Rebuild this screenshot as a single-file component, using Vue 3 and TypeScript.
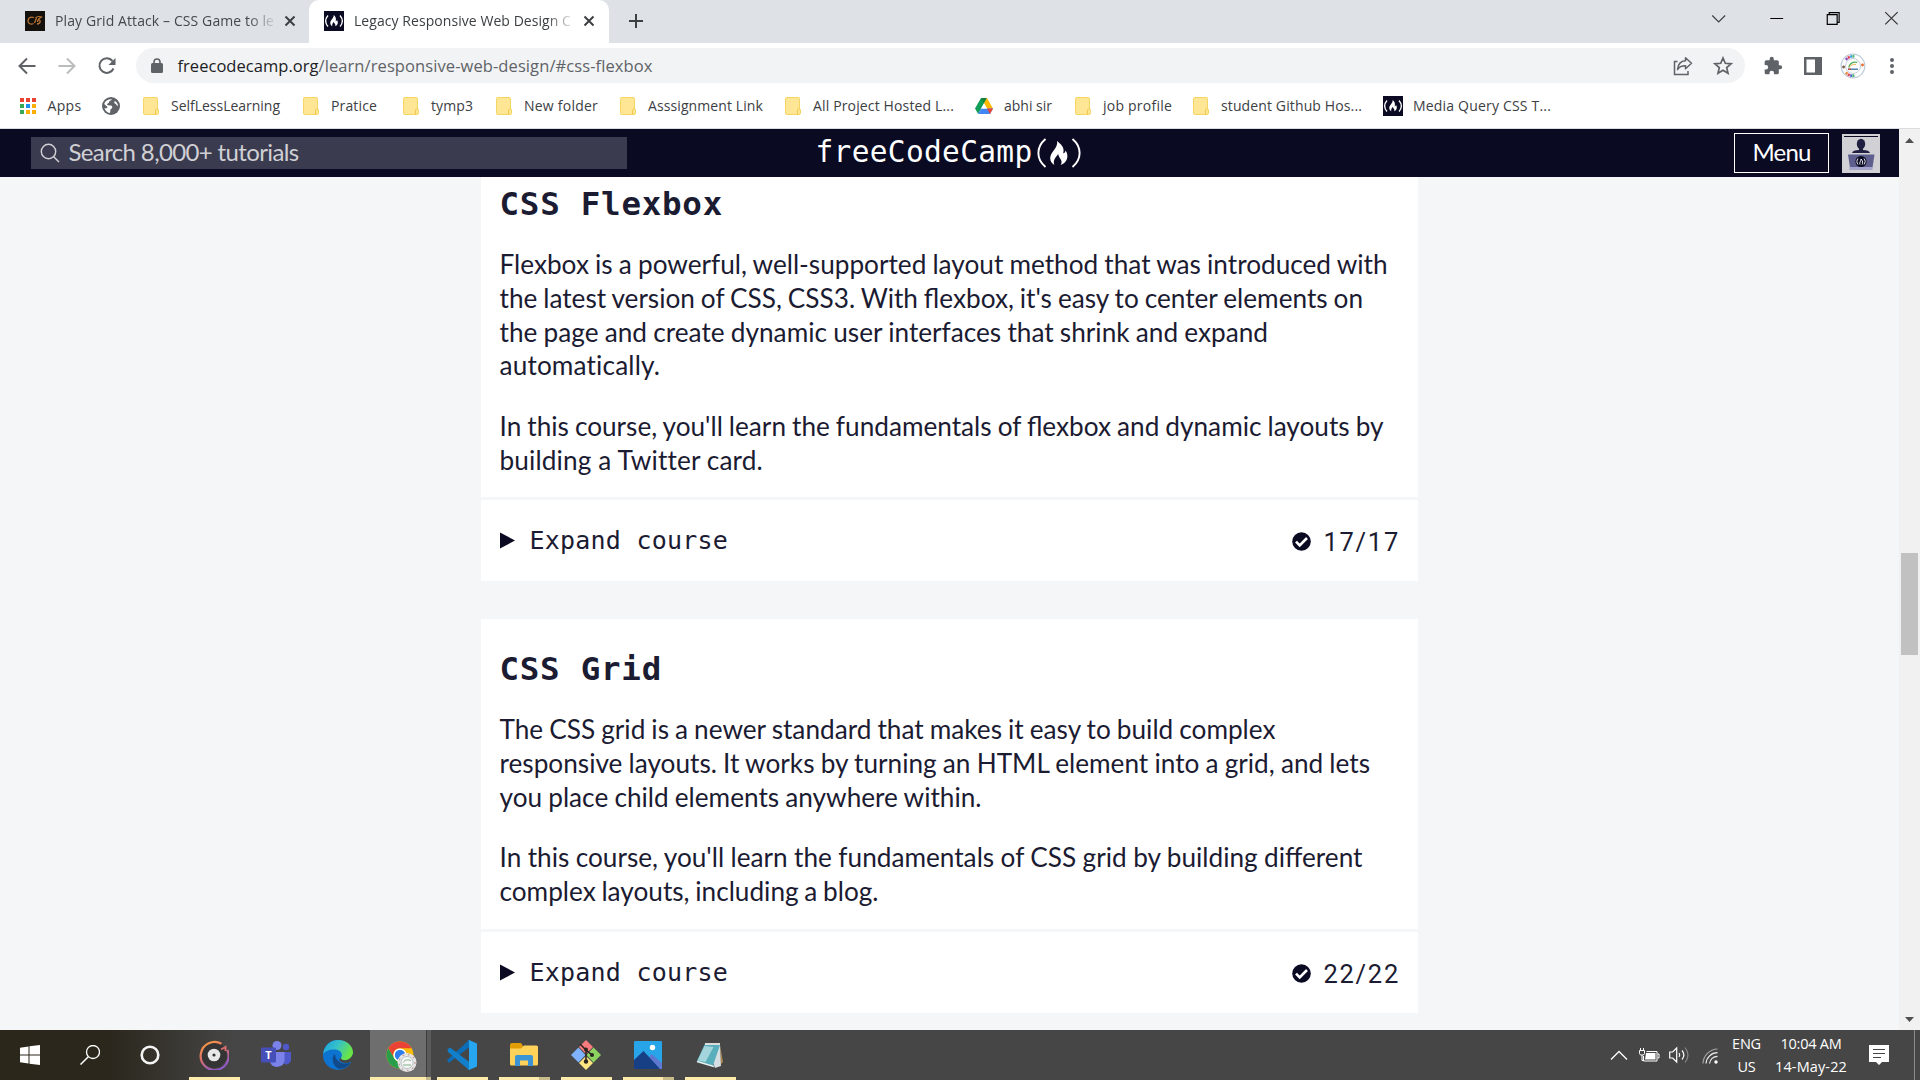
<script setup lang="ts">
import type { Directive } from 'vue'

interface Bookmark { icon: string; label: string; slot: number; text: number }
interface Line { text: string; width: number; loose?: boolean }
interface Course { title: string; titleWidth: number; paragraphs: Line[][]; done: string; height: number }
interface App { name: string; state: string }

// Spreads the letters (or, with .words, the words) so that a label takes exactly the given width.
const vFit: Directive<HTMLElement, number, 'words'> = {
  mounted(el, { value, modifiers }) {
    const text = (el.textContent ?? '').trim()
    const rest = value - el.getBoundingClientRect().width
    if (modifiers.words) el.style.wordSpacing = `${rest / (text.split(' ').length - 1)}px`
    else el.style.letterSpacing = `${rest / text.length}px`
  },
}

const bookmarks: Bookmark[] = [
  { icon: 'apps', label: 'Apps', slot: 83, text: 34 },
  { icon: 'globe', label: '', slot: 41, text: 0 },
  { icon: 'folder', label: 'SelfLessLearning', slot: 160, text: 109 },
  { icon: 'folder', label: 'Pratice', slot: 100, text: 46 },
  { icon: 'folder', label: 'tymp3', slot: 93, text: 42 },
  { icon: 'folder', label: 'New folder', slot: 124, text: 74 },
  { icon: 'folder', label: 'Asssignment Link', slot: 165, text: 115 },
  { icon: 'folder', label: 'All Project Hosted L...', slot: 190, text: 141 },
  { icon: 'drive', label: 'abhi sir', slot: 100, text: 48 },
  { icon: 'folder', label: 'job profile', slot: 118, text: 69 },
  { icon: 'folder', label: 'student Github Hos...', slot: 190, text: 141 },
  { icon: 'fcc', label: 'Media Query CSS T...', slot: 180, text: 138 },
]

const courses: Course[] = [
  {
    title: 'CSS Flexbox',
    titleWidth: 223.5,
    paragraphs: [
      [
        { text: 'Flexbox is a powerful, well-supported layout method that was introduced with', width: 888 },
        { text: "the latest version of CSS, CSS3. With flexbox, it's easy to center elements on", width: 863.5 },
        { text: 'the page and create dynamic user interfaces that shrink and expand', width: 768.5 },
        { text: 'automatically.', width: 161, loose: true },
      ],
      [
        { text: "In this course, you'll learn the fundamentals of flexbox and dynamic layouts by", width: 884 },
        { text: 'building a Twitter card.', width: 262.5, loose: true },
      ],
    ],
    done: '17/17',
    height: 343,
  },
  {
    title: 'CSS Grid',
    titleWidth: 162.5,
    paragraphs: [
      [
        { text: 'The CSS grid is a newer standard that makes it easy to build complex', width: 776 },
        { text: 'responsive layouts. It works by turning an HTML element into a grid, and lets', width: 870.5 },
        { text: 'you place child elements anywhere within.', width: 482 },
      ],
      [
        { text: "In this course, you'll learn the fundamentals of CSS grid by building different", width: 863 },
        { text: 'complex layouts, including a blog.', width: 379 },
      ],
    ],
    done: '22/22',
    height: 310,
  },
]

const apps: App[] = [
  { name: 'groove', state: 'open' },
  { name: 'teams', state: '' },
  { name: 'edge', state: '' },
  { name: 'chrome', state: 'active' },
  { name: 'code', state: 'open' },
  { name: 'explorer', state: 'multi' },
  { name: 'git', state: 'open' },
  { name: 'photos', state: 'multi' },
  { name: 'notepad', state: 'open' },
]
</script>

<template>
  <div class="screen">
    <div class="tabstrip">
      <div class="tab">
        <svg class="favicon" width="20" height="20" viewBox="0 0 20 20">
          <rect width="20" height="20" fill="#14100c" />
          <path d="M9 6.500C5 5 3 7.500 3 10s3 4 5.500 2.500M9.500 12l2-5M10.500 7c2-2 5-1.500 6-1-2 1-4 3-4 5M13 8.500c3 0 3 4-1 4.500" fill="none" stroke="#b87436" stroke-width="1.300" />
        </svg>
        <div class="tab-title"><span v-fit="219">Play Grid Attack – CSS Game to le</span></div>
        <svg class="x" width="12" height="12" viewBox="0 0 12 12"><path d="M1.500 1.500l9 9m0-9l-9 9" stroke="#3c4043" stroke-width="2" /></svg>
      </div>
      <div class="tab active">
        <svg class="favicon" width="20" height="20" viewBox="0 0 20 20">
          <rect width="20" height="20" fill="#0a0a23" />
          <path d="M4 4.500C1 8 1 12 4 15.500M16 4.500c3 3.500 3 7.500 0 11" fill="none" stroke="#fff" stroke-width="1.300" />
          <path d="M9.500 4c1 3-3.500 5-3.200 8.200.1 1.400.9 2.400 2 3-.6-2 .6-3 1.500-4.500.3 2 2.400 2.600 1.400 4.500 3-1 3.200-4.300 1.800-6.200-.3 1-.8 1.300-1.300 1.300C12.500 7.800 11.500 5 9.500 4z" fill="#fff" />
        </svg>
        <div class="tab-title"><span v-fit="217">Legacy Responsive Web Design C</span></div>
        <svg class="x" width="12" height="12" viewBox="0 0 12 12"><path d="M1.500 1.500l9 9m0-9l-9 9" stroke="#3c4043" stroke-width="2" /></svg>
      </div>
      <svg class="plus" width="16" height="16" viewBox="0 0 16 16"><path d="M8 1v14M1 8h14" stroke="#3c4043" stroke-width="2" /></svg>
      <div class="winbuttons">
        <svg viewBox="0 0 58 36"><path d="M22.500 15.500l6.500 6.500 6.500-6.500" fill="none" stroke="#3c4043" stroke-width="1.200" /></svg>
        <svg viewBox="0 0 58 36"><path d="M22.500 18.500h13" stroke="#000" /></svg>
        <svg viewBox="0 0 58 36"><path d="M22.500 14.500h10v10h-10zM24.500 14.500v-2h10v10h-2" fill="none" stroke="#000" stroke-width="1.200" /></svg>
        <svg viewBox="0 0 58 36"><path d="M22.500 12l12.500 12.500m0-12.500L22.500 24.500" stroke="#333" stroke-width="1.200" /></svg>
      </div>
    </div>

    <div class="toolbar">
      <div class="nav">
        <svg width="40" height="20" viewBox="0 0 40 20"><path d="M28.500 10H13M20 2.500L12.500 10l7.500 7.500" fill="none" stroke="#5f6368" stroke-width="2" /></svg>
        <svg width="40" height="20" viewBox="0 0 40 20"><path d="M11.500 10H27M20 2.500l7.500 7.500-7.500 7.500" fill="none" stroke="#babcbe" stroke-width="2" /></svg>
        <svg width="40" height="20" viewBox="0 0 40 20"><path d="M26.500 12.500A7.300 7.300 0 1 1 25.500 5" fill="none" stroke="#5f6368" stroke-width="2" /><path d="M28.500 2v7h-7z" fill="#5f6368" /></svg>
      </div>
      <div class="omnibox">
        <svg class="lock" width="12" height="16" viewBox="0 0 12 16"><rect y="5" width="12" height="10" rx="1.500" fill="#5f6368" /><path d="M3 6V4a3 3 0 0 1 6 0v2" fill="none" stroke="#5f6368" stroke-width="1.600" /></svg>
        <div class="url"><b v-fit="141">freecodecamp.org</b><span v-fit="334">/learn/responsive-web-design/#css-flexbox</span></div>
        <svg class="share" width="20" height="20" viewBox="0 0 20 20"><path d="M4.500 5.500H1.500V18.500h13.500V15" fill="none" stroke="#5f6368" stroke-width="1.500" /><path d="M12.500 1.800l6 5.500-6 5.500V9.800c-4 0-6.500 1.200-8 3.700C5 8.500 8 5 12.500 4.800z" fill="none" stroke="#5f6368" stroke-width="1.500" stroke-linejoin="round" /></svg>
        <svg class="star" width="20" height="20" viewBox="0 0 20 20"><path d="M10 2l2.300 5.300 5.800.5-4.400 3.800 1.300 5.600-5-3-5 3 1.300-5.600L1.900 7.800l5.800-.5z" fill="none" stroke="#5f6368" stroke-width="1.700" /></svg>
      </div>
      <div class="actions">
        <svg width="20" height="20" viewBox="0 0 24 24"><path d="M20.500 11H19V7a2 2 0 0 0-2-2h-4V3.500a2.500 2.500 0 0 0-5 0V5H4a2 2 0 0 0-2 2v3.800h1.500a2.700 2.700 0 0 1 0 5.400H2V20a2 2 0 0 0 2 2h3.800v-1.500a2.700 2.700 0 0 1 5.400 0V22H17a2 2 0 0 0 2-2v-4h1.500a2.500 2.500 0 0 0 0-5z" fill="#5f6368" /></svg>
        <svg width="20" height="20" viewBox="0 0 20 20"><path d="M1 1h18v18H1zM3.500 3.500v13h8.500v-13z" fill="#5f6368" fill-rule="evenodd" /></svg>
        <svg width="26" height="26" viewBox="0 0 26 26">
          <circle cx="13" cy="13" r="11.800" fill="#fff" stroke="#bccbd6" stroke-width="1.200" />
          <circle cx="13" cy="13" r="7.500" fill="#fff" stroke="#c3cfd9" />
          <path d="M5.800 6.800l1.600-1.600" stroke="#8a4fc0" stroke-width="2.600" /><path d="M7.800 4.800l2-1" stroke="#e0435c" stroke-width="2.600" /><path d="M10.200 3.700l2-.4" stroke="#3f9be0" stroke-width="2.600" /><path d="M12.400 3.300l2 .1" stroke="#4eb87a" stroke-width="2.600" />
          <path d="M5.800 19.500l1.600 1.500" stroke="#f08a3c" stroke-width="2.600" /><path d="M7.800 21.300l2 1" stroke="#e0435c" stroke-width="2.600" /><path d="M10.200 22.500l2 .3" stroke="#4a62c8" stroke-width="2.600" /><path d="M12.400 22.800l2-.2" stroke="#45b06a" stroke-width="2.600" />
          <circle cx="3.600" cy="14" r="1.400" fill="#7a5a3c" /><circle cx="22.500" cy="12" r="1.400" fill="#e8692e" />
          <path d="M8.800 14.500c.7-3.500 3.500-5.800 8.500-5.200" fill="none" stroke="#4fae54" stroke-width="1.300" /><path d="M9.500 14c2-2.500 4-3 6.500-2.500" fill="none" stroke="#efb458" /><path d="M8 16.200h10" stroke="#3d6a9e" stroke-width="1.300" /><path d="M8 16.200h3" stroke="#cf4a3b" stroke-width="1.300" />
        </svg>
        <svg width="6" height="20" viewBox="0 0 6 20"><circle cx="3" cy="4" r="2" fill="#5f6368" /><circle cx="3" cy="10" r="2" fill="#5f6368" /><circle cx="3" cy="16" r="2" fill="#5f6368" /></svg>
      </div>
    </div>

    <div class="bookmarks">
      <div v-for="(b, i) in bookmarks" :key="i" class="bookmark" :style="{ width: b.slot + 'px' }">
        <svg v-if="b.icon === 'apps'" width="18" height="18" viewBox="0 0 18 18">
          <path d="M1 1h4v4H1zM7 1h4v4H7zM13 1h4v4h-4z" fill="#ea4335" />
          <path d="M1 7h4v4H1zM1 13h4v4H1z" fill="#34a853" /><path d="M7 7h4v4H7z" fill="#1a91f0" />
          <path d="M13 7h4v4h-4zM7 13h4v4H7zM13 13h4v4h-4z" fill="#fbae04" />
        </svg>
        <svg v-else-if="b.icon === 'globe'" width="18" height="18" viewBox="0 0 18 18">
          <circle cx="9" cy="9" r="9" fill="#5f6368" />
          <path d="M10 2.200c-1 1.800-3 1.300-3 3C7 6.500 5 6 5 7.800c1 1.200 4 0 5 1.500s-.5 2.300-1.300 3c-.7 1-.2 2.500-.7 3.800C5 15.500 3 13.500 2.500 11c1.500.5 3 .3 3-1L2.200 7C3 4 6 2 10 2.200zM13 4c-1.500 1-.5 2.500.5 2.800C14.500 7 14 8.500 16 9c0-2-1.200-4-3-5z" fill="#fff" />
        </svg>
        <svg v-else-if="b.icon === 'folder'" width="16" height="18" viewBox="0 0 16 18">
          <path d="M1.500.5h12a1 1 0 0 1 1 1V12h.5a.8.800 0 0 1 .5.800V16a1.500 1.500 0 0 1-1.500 1.500H1.500a1 1 0 0 1-1-1v-15a1 1 0 0 1 1-1z" fill="#ffe694" stroke="#f5d563" />
          <path d="M12.500 17.500V13.500c0-1 .5-1.500 1.300-1.500h.7" fill="none" stroke="#efc849" />
        </svg>
        <svg v-else-if="b.icon === 'drive'" width="18" height="18" viewBox="0 0 18 18">
          <path d="M6 1h6L3.200 17 0 11.500z" fill="#0f9d58" /><path d="M6 1h6l-3 5.300z" fill="#188038" />
          <path d="M12 1l6 10.500h-6L9 6.200z" fill="#ffba00" /><path d="M6.200 11.500H18L15 17H3.200z" fill="#4285f4" /><path d="M12 11.500h6L15 17z" fill="#ea4335" />
          <path d="M9 6.300l3 5.200H6z" fill="#fff" />
        </svg>
        <svg v-else width="20" height="20" viewBox="0 0 20 20">
          <rect width="20" height="20" fill="#0a0a23" />
          <path d="M4 4.500C1 8 1 12 4 15.500M16 4.500c3 3.500 3 7.500 0 11" fill="none" stroke="#fff" stroke-width="1.300" />
          <path d="M9.500 4c1 3-3.500 5-3.200 8.200.1 1.400.9 2.400 2 3-.6-2 .6-3 1.500-4.500.3 2 2.400 2.600 1.400 4.500 3-1 3.200-4.300 1.800-6.200-.3 1-.8 1.300-1.300 1.300C12.500 7.800 11.500 5 9.500 4z" fill="#fff" />
        </svg>
        <span v-if="b.label" v-fit="b.text">{{ b.label }}</span>
      </div>
    </div>

    <div class="viewport">
      <div class="page">
        <header class="site-header">
          <div class="search">
            <svg width="20" height="20" viewBox="0 0 20 20"><circle cx="8.500" cy="8.500" r="7.200" fill="none" stroke="#d0d0d5" stroke-width="1.400" /><path d="M13.500 13.500l5.500 5.500" stroke="#d0d0d5" stroke-width="1.500" /></svg>
            <span v-fit="230">Search 8,000+ tutorials</span>
          </div>
          <div class="logo">
            <span v-fit="217">freeCodeCamp</span>
            <svg width="46" height="32" viewBox="0 0 46 32">
              <path d="M9.500 2C0 10 0 22 9.500 30M36.500 2c9.500 8 9.500 20 0 28" fill="none" stroke="#fff" stroke-width="1.900" />
              <path d="M21 4c1.700 6.500-6.800 11-6.800 17.200 0 3 1.800 5.500 4.200 6.800-1.700-4.500.8-7 3.800-11 .5 4.500 5.600 6.500 2.300 11 6.500-2 9-9 5-14.500-.3 2-1 2.800-2.300 2.700C29 11 25 7 21 4z" fill="#fff" />
            </svg>
          </div>
          <div class="account">
            <div class="menu"><span v-fit="58">Menu</span></div>
            <svg width="38" height="39" viewBox="0 0 38 39">
              <rect width="38" height="39" fill="#d0d0d5" /><path d="M2 2.500h34" stroke="#0a0a23" />
              <ellipse cx="19" cy="10" rx="4.200" ry="5.300" fill="#1f2040" /><path d="M17 14h4v2c4 .2 6.500 1 7 3H10c.5-2 3-2.800 7-3z" fill="#1f2040" />
              <path d="M6 20.500h26.500l-2 13H8z" fill="#5f5f8f" /><path d="M7.500 33h23v3h-23z" fill="#a5a5cb" />
              <circle cx="19" cy="27.500" r="5.600" fill="#0a0a23" />
              <path d="M16 24.500c-1.500 2-1.500 4 0 6M22 24.500c1.500 2 1.500 4 0 6M18 30.500c-1-2 1-3 1-5.500 2 2 2 4 1 5.500" fill="none" stroke="#fff" stroke-width=".9" />
            </svg>
          </div>
        </header>

        <main class="content">
          <section v-for="c in courses" :key="c.title" class="course">
            <div class="intro" :style="{ height: c.height + 'px' }">
              <h2><span v-fit="c.titleWidth">{{ c.title }}</span></h2>
              <p v-for="(p, i) in c.paragraphs" :key="i">
                <template v-for="l in p" :key="l.text">
                  <span v-if="l.loose" v-fit="l.width">{{ l.text }}</span>
                  <span v-else v-fit.words="l.width">{{ l.text }}</span>
                </template>
              </p>
            </div>
            <div class="expand">
              <svg width="15" height="17" viewBox="0 0 15 17"><path d="M0 .5l15 8-15 8z" fill="#0a0a23" /></svg>
              <span class="mono" v-fit="198.5">Expand course</span>
              <svg class="check" width="19" height="19" viewBox="0 0 19 19"><circle cx="9.500" cy="9.500" r="9.300" fill="#0a0a23" /><path d="M4 9.700l3.700 3.800 7.300-7.500" fill="none" stroke="#fff" stroke-width="2.600" /></svg>
              <span class="count" v-fit="76.5">{{ c.done }}</span>
            </div>
          </section>
        </main>
      </div>
      <div class="scrollbar">
        <svg width="9" height="5" viewBox="0 0 9 5"><path d="M0 5l4.500-5L9 5z" fill="#505050" /></svg>
        <div class="thumb"></div>
        <svg width="9" height="5" viewBox="0 0 9 5"><path d="M0 0l4.500 5L9 0z" fill="#505050" /></svg>
      </div>
    </div>

    <div class="taskbar">
      <div class="sys"><svg width="20" height="20" viewBox="0 0 20 20"><path d="M0 2.700l8.500-1.200v8H0zM9.500 1.300L20 0v9.500H9.500zM0 10.500h8.500v8L0 17.300zM9.500 10.500H20V20L9.500 18.700z" fill="#fff" /></svg></div>
      <div class="sys"><svg width="20" height="20" viewBox="0 0 20 20"><circle cx="13" cy="7" r="6.500" fill="none" stroke="#fff" stroke-width="1.300" /><path d="M8.300 11.700L.5 19.500" stroke="#fff" stroke-width="1.500" /></svg></div>
      <div class="sys cortana"><svg width="20" height="20" viewBox="0 0 20 20"><circle cx="10" cy="10" r="8.300" fill="none" stroke="#f4f4f4" stroke-width="2.600" /></svg></div>
      <div v-for="a in apps" :key="a.name" class="app" :class="a.state">
        <svg v-if="a.name === 'groove'" width="30" height="30" viewBox="0 0 30 30">
          <defs><linearGradient id="ring" x1="0" y1="0" x2=".5" y2="1"><stop offset="0" stop-color="#f9a13a" /><stop offset=".5" stop-color="#e0716c" /><stop offset="1" stop-color="#9059c8" /></linearGradient></defs>
          <circle cx="15" cy="15" r="12.800" fill="#343434" /><path d="M22.500 3.800A14 14 0 1 0 28.300 10" fill="none" stroke="url(#ring)" stroke-width="2.200" />
          <path d="M22 9.500l4.500-2.500v4" fill="none" stroke="#d56d6e" stroke-width="2" />
          <circle cx="15" cy="15" r="6.300" fill="#e8e8e8" /><circle cx="15" cy="15" r="1.600" fill="#333" />
        </svg>
        <svg v-else-if="a.name === 'teams'" width="30" height="30" viewBox="0 0 30 30">
          <circle cx="25" cy="7" r="3.200" fill="#5059c9" /><path d="M20 12h10v8a5 5 0 0 1-7 4z" fill="#5059c9" />
          <circle cx="16" cy="5.500" r="4.500" fill="#7b83eb" /><path d="M9 12h14.500v8a7.500 7.500 0 0 1-14.500 2z" fill="#7b83eb" />
          <rect y="7.500" width="15" height="15" rx="1.200" fill="#464eb8" /><text x="7.500" y="19" text-anchor="middle" class="teams-t">T</text>
        </svg>
        <svg v-else-if="a.name === 'edge'" width="30" height="30" viewBox="0 0 30 30">
          <defs><linearGradient id="edgeTop" x1="0" y1="0" x2="1" y2=".4"><stop offset="0" stop-color="#1b9de2" /><stop offset=".5" stop-color="#35c1c9" /><stop offset="1" stop-color="#6ae545" /></linearGradient></defs>
          <circle cx="15" cy="15" r="15" fill="#0c74d0" />
          <path d="M.1 14C1 6 7 0 15 0c9 0 15 6 15 12.500 0 5-4 8-8.500 8-3.500 0-4.700-1.200-3-3.500 1.500-3-1-7-6-7.500C7 9 2 11 .1 14z" fill="url(#edgeTop)" />
          <path d="M12 14c-4 3-3 11 3 14.500 5 1 10-2 12.500-6-4 1.500-8 1.500-11-.5-3-2-4.500-5-4.500-8z" fill="#114a8b" />
          <path d="M30 14v8h-2.500c-3 1-7 1.500-10-.5-2-1.500-.5-2.500 0-4 1 3 4 3 6 2.500 3-.7 5.500-3 6.500-6z" fill="#464646" />
        </svg>
        <svg v-else-if="a.name === 'chrome'" width="32" height="32" viewBox="0 0 32 32">
          <circle cx="15" cy="15" r="13.500" fill="#fbbc04" />
          <path d="M3.300 8.200A13.500 13.500 0 0 1 26.700 8.200H15a6.700 6.700 0 0 0-6 10z" fill="#ea4335" />
          <path d="M3.300 8.200l6 10A6.700 6.700 0 0 0 17 21.500l-2.500 7A13.500 13.500 0 0 1 3.300 8.200z" fill="#289e4b" />
          <circle cx="15" cy="15" r="6.600" fill="#fff" /><circle cx="15" cy="15" r="5.200" fill="#2f7de9" />
          <circle cx="22" cy="22.500" r="9.500" fill="#e4e4e4" /><circle cx="22" cy="22.500" r="6" fill="#f8f8f8" stroke="#b9c3c7" />
          <circle cx="22" cy="22.500" r="8" fill="none" stroke="#c59c98" stroke-width="1.300" stroke-dasharray="1.500 4" /><path d="M18 22.500c2-3 5-3 8-2M18 25h8" fill="none" stroke="#7fae85" />
        </svg>
        <svg v-else-if="a.name === 'code'" width="30" height="30" viewBox="0 0 30 30">
          <path d="M22 0l-19.500 18L0 20.500l2 2.200L24 6z" fill="#0b6db8" /><path d="M.5 9.500L3 7.500 24 23l-2 7L1 12z" fill="#117fc9" />
          <path d="M22 0l8 3.500v23L22 30c-.8 0-.5-.5 0-1.500v-27C21.500.5 21.500 0 22 0z" fill="#27a5f0" /><path d="M22 8.500v13L13.500 15z" fill="#464646" />
        </svg>
        <svg v-else-if="a.name === 'explorer'" width="30" height="26" viewBox="0 0 30 26">
          <path d="M1 3a2 2 0 0 1 2-2h9l2 3v4H1z" fill="#e29c05" /><path d="M1 6.500h11l3-3h12.500A1.500 1.500 0 0 1 29 5v17a1.500 1.500 0 0 1-1.500 1.500h-25A1.500 1.500 0 0 1 1 22z" fill="#ffd35a" />
          <path d="M6 24V15a2 2 0 0 1 2-2h14a2 2 0 0 1 2 2v9h-5v-5.500h-8V24z" fill="#3b94d3" />
        </svg>
        <svg v-else-if="a.name === 'git'" width="30" height="30" viewBox="0 0 30 30">
          <path d="M15 0l7 7-7 7-7-7z" fill="#fa7b7e" /><path d="M7.500 7.500l7 7.500-7 7.500L0 15z" fill="#80b3ff" /><path d="M22.500 7.500L30 15l-7.500 7.500L15.500 15z" fill="#8dd35f" /><path d="M15 16l7 7-7 7-7-7z" fill="#ffe680" />
          <path d="M9 4l6 6v13M15 10l6 5" fill="none" stroke="#2b2522" stroke-width="1.600" /><circle cx="15" cy="9.500" r="2" fill="#2b2522" /><circle cx="15" cy="21.500" r="2.200" fill="#2b2522" /><circle cx="21" cy="15" r="2" fill="#2b2522" />
        </svg>
        <svg v-else-if="a.name === 'photos'" width="28" height="28" viewBox="0 0 28 28">
          <rect width="28" height="28" rx="1.200" fill="#27a5e8" /><path d="M13 19l4.500-6 10.500 9v6H13z" fill="#5f78cf" /><path d="M0 19l9.500-9L26 28H1.200A1.200 1.200 0 0 1 0 26.800z" fill="#173f86" /><circle cx="18.500" cy="6.500" r="2.700" fill="#fff" />
        </svg>
        <svg v-else width="30" height="28" viewBox="0 0 30 28">
          <path d="M25 4l3 17-2 2z" fill="#b18a4b" /><path d="M11 3l14 1 1 21-6 2z" fill="#d5dee0" /><path d="M10 2.500l15 1.500-7 20.500L2 20z" fill="#58aebb" /><path d="M9.500 5l9 1-8 15-8-1.500z" fill="#a4d5dd" /><path d="M10 2h15v2H10z" fill="#dcdcdc" /><path d="M2 20.500L19 25.500" stroke="#e7f4f5" stroke-width="1.500" />
        </svg>
        <i v-if="a.state" class="line"></i>
      </div>
      <div class="tray">
        <svg width="18" height="12" viewBox="0 0 18 12"><path d="M1 10.500l8-8 8 8" fill="none" stroke="#fff" stroke-width="1.300" /></svg>
        <svg class="battery" width="21" height="15" viewBox="0 0 21 15"><path d="M7.500 3.500h10.500v9.500H4.500V8" fill="none" stroke="#fff" /><path d="M7 5h9.500v6.500H6z" fill="#fff" /><path d="M18.500 6h1.500v4h-1.500M1.500 0v2M4.500 0v2M.5 2.500h5v3l-1 1.500h-3l-1-1.500zM3 7v5.500h1.500" fill="none" stroke="#fff" /></svg>
        <svg class="sound" width="21" height="18" viewBox="0 0 21 18"><path d="M.7 6h3l4-4v14l-4-4h-3z" fill="none" stroke="#fff" stroke-width="1.200" /><path d="M10 7c1 1.300 1 2.700 0 4M13 4.500c2.500 3 2.500 6 0 9" fill="none" stroke="#fff" stroke-width="1.200" /><path d="M16 1.500c4 5 4 10 0 15" fill="none" stroke="#888" stroke-width="1.200" /></svg>
        <svg class="wifi" width="16" height="16" viewBox="0 0 16 16"><path d="M1 15.500A15 15 0 0 1 15.500 1" fill="none" stroke="#a5a5a5" stroke-width="1.200" /><path d="M4 15.500A11.500 11.500 0 0 1 15.500 4.700M7.500 15.500a8 8 0 0 1 8-7.200" fill="none" stroke="#eee" stroke-width="1.200" /><circle cx="14" cy="14" r="1.700" fill="#fff" /></svg>
        <div class="stack lang"><span v-fit="29">ENG</span><span v-fit="18">US</span></div>
        <div class="stack clock"><span v-fit="61">10:04 AM</span><span v-fit="72">14-May-22</span></div>
        <svg class="notice" width="20" height="20" viewBox="0 0 20 20"><path d="M0 0h20v17h-7l-3 3-3-3H0z" fill="#fff" /><path d="M4 4.500h12M4 8.500h12M4 12.500h8" stroke="#464646" stroke-width="1.200" /></svg>
        <div class="peek"></div>
      </div>
    </div>
  </div>
</template>

<style>
body { margin: 0; overflow: hidden; }
</style>

<style scoped>
* { box-sizing: border-box; }
svg { display: block; flex: none; }
span, b { white-space: nowrap; }
.screen { width: 1920px; height: 1080px; display: flex; flex-direction: column; overflow: hidden; background: #fff; font-family: "Open Sans", "Noto Sans", sans-serif; }

.tabstrip { height: 43px; flex: none; display: flex; background: #dee1e6; }
.tab { width: 309px; height: 43px; display: flex; align-items: center; padding: 0 13px 2px 25px; font-size: 14px; color: #45494d; }
.tab.active { width: 300px; padding: 0 14px 2px 15px; background: #fff; border-radius: 10px 10px 0 0; color: #3c4043; }
.tab-title { width: 220px; margin-left: 10px; overflow: hidden; display: flex; mask-image: linear-gradient(90deg, #000 88%, transparent 101%); }
.tab.active .tab-title { width: 219px; }
.x { margin-left: auto; }
.plus { margin: 13px 0 0 19px; }
.winbuttons { margin-left: auto; display: flex; }
.winbuttons svg { width: 57.400px; height: 36px; }

.toolbar { height: 45px; flex: none; display: flex; align-items: center; }
.nav { display: flex; padding-left: 7px; width: 136px; }
.omnibox { width: 1609px; height: 35px; background: #f1f3f4; border-radius: 18px; display: flex; align-items: center; padding-left: 15px; }
.url { margin-left: 14.500px; width: 1494.500px; display: flex; font-size: 16.500px; line-height: 24px; color: #5f6368; }
.url b { font-weight: 400; color: #202124; }
.share { margin-left: 1px; }
.star { margin-left: 19.500px; }
.actions { display: flex; align-items: center; gap: 20px; padding-left: 18px; }
.actions svg:nth-child(3) { margin-left: -3px; }
.actions svg:nth-child(4) { margin-left: 3px; }

.bookmarks { height: 41px; flex: none; display: flex; align-items: center; padding: 0 0 5px 19px; border-bottom: 1px solid #dadce0; font-size: 14px; line-height: 20px; color: #3c4043; }
.bookmark { display: flex; align-items: center; flex: none; gap: 12px; }
.bookmark svg { margin-top: 1px; }
.bookmark:first-child { gap: 10.500px; }
.bookmark:last-child { gap: 10px; }
.bookmark:nth-child(9) { gap: 11px; }

.viewport { height: 901px; flex: none; display: flex; }
.page { width: 1899px; display: flex; flex-direction: column; background: #f5f6f7; overflow: hidden; }
.site-header { height: 48px; flex: none; display: flex; align-items: center; background: #0a0a23; color: #fff; font-family: Lato, sans-serif; padding-left: 31px; position: relative; z-index: 1; }
.search { width: 596px; height: 32px; background: #3b3b4f; display: flex; align-items: center; gap: 8px; padding-left: 9.500px; font-size: 24px; line-height: 32px; color: #d0d0d5; }
.search svg { margin-left: -1px; margin-right: 1px; }
.search span { padding-bottom: 2px; }
.menu span { padding-bottom: 3px; }
.logo { width: 270px; margin-left: 188.500px; display: flex; align-items: center; height: 48px; font-family: "DejaVu Sans Mono", monospace; font-size: 29.500px; line-height: 40px; }
.logo svg { margin-left: 3px; margin-bottom: 1px; }
.logo span { padding-bottom: 3px; }
.account { margin-left: auto; display: flex; align-items: center; gap: 13px; padding-right: 19px; }
.menu { width: 95px; height: 40px; border: 1px solid #fff; display: flex; justify-content: center; align-items: center; font-size: 24px; }

.content { width: 937px; margin: -23px 0 0 481px; display: flex; flex-direction: column; gap: 38px; color: #1b1b32; }
.course { display: flex; flex-direction: column; gap: 3px; flex: none; }
.intro { background: #fff; padding: 0 18.500px; }
h2 { margin: 0; height: 94.200px; padding-top: 30.200px; font: 700 32.500px/40px "DejaVu Sans Mono", monospace; }
p { margin: 0 0 27px; font: 400 26.200px/33.750px Lato, sans-serif; display: flex; flex-direction: column; align-items: flex-start; }
.expand { height: 81px; background: #fff; display: flex; align-items: center; padding: 0 18px 0 18.500px; color: #1b1b32; font-family: "DejaVu Sans Mono", monospace; font-size: 25px; line-height: 32px; }
.mono { margin-left: 15px; }
.check { margin-left: auto; margin-top: 1px; }
.count { margin-left: 12.500px; margin-top: 2px; font-family: Roboto, sans-serif; font-size: 25.500px; }

.scrollbar { width: 21px; background: #f1f1f1; display: flex; flex-direction: column; align-items: center; padding: 9px 0 8px; }
.thumb { width: 17px; height: 102px; margin: 410px 0 auto; background: #c1c1c1; }

.taskbar { height: 50px; flex: none; display: flex; background: linear-gradient(90deg, #2c271b 0, #2b271d 110px, #464646 235px, #464646 100%); color: #fff; }
.sys { width: 60px; height: 50px; display: flex; align-items: center; justify-content: center; }
.cortana { width: 63px; padding-right: 3px; }
.app { width: 62px; height: 50px; position: relative; display: flex; align-items: center; justify-content: center; flex: none; }
.active.app { background: linear-gradient(90deg, transparent 1px, #6e6e6e 1px, #6e6e6e 57px, #3d3d3d 57px, #3d3d3d 58px, #5b5b5b 58px); }
.active.app svg { margin: 2px 0 0 2px; }
.line { position: absolute; bottom: 0; left: 6px; width: 51px; height: 3px; background: #fdebab; }
.active .line { left: 1px; width: 61px; background: linear-gradient(90deg, #fdebab 56px, #c4b98c 56px); }
.multi .line { background: linear-gradient(90deg, #fdebab 40px, #c9bc8b 40px); }
.teams-t { font: 700 11px "Open Sans", sans-serif; fill: #fff; }
.tray { margin-left: auto; width: 310px; display: flex; align-items: center; }
.battery { margin-left: 11px; }
.sound { margin-left: 9px; }
.wifi { margin-left: 12px; margin-top: 2px; }
.stack { display: flex; flex-direction: column; align-items: center; font-size: 14.500px; line-height: 23px; }
.lang { width: 30px; margin-left: 13.500px; }
.clock { width: 74px; margin-left: 12.500px; }
.notice { margin-left: 21px; }
.peek { margin-left: auto; margin-right: 5px; width: 1px; height: 50px; background: #8b8b8b; }
</style>
